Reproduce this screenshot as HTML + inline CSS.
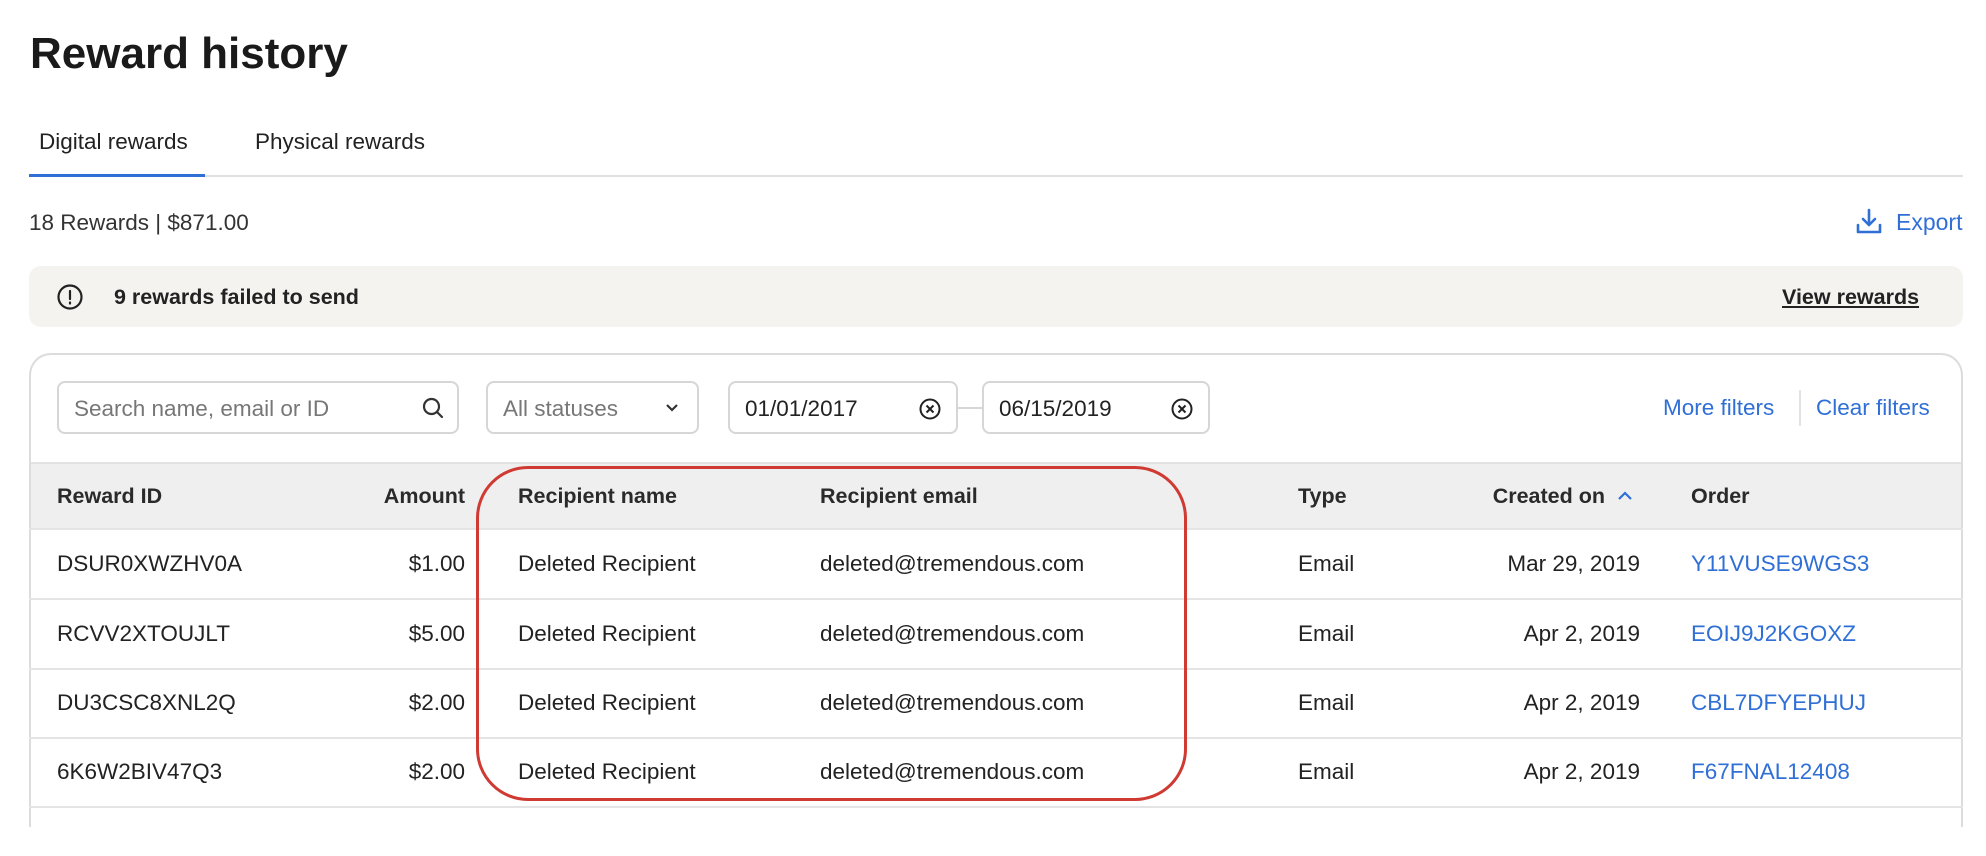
<!DOCTYPE html>
<html><head><meta charset="utf-8"><style>
*{margin:0;padding:0;box-sizing:border-box}
body{width:1986px;height:856px;overflow:hidden;background:#fff;font-family:"Liberation Sans",sans-serif;color:#222;position:relative}
.a{position:absolute;white-space:nowrap}
.t{font-size:22.5px;line-height:1}
.blue{color:#2f6fd6}
.box{position:absolute;top:381px;height:53px;border:2px solid #d6d6d6;border-radius:8px;background:#fff}
.box span{position:absolute;top:15px;font-size:22.5px;line-height:1}
.th{font-weight:700;color:#2a2a2a;font-size:21.5px}
.row{position:absolute;left:29px;width:1934px;border-top:2px solid #e4e4e4}
</style></head><body>
<div class="a" style="left:30px;top:29px;font-size:44px;font-weight:700;color:#1a1a1a">Reward history</div>
<div class="a t" style="left:39px;top:131px;color:#222">Digital rewards</div>
<div class="a t" style="left:255px;top:131px;color:#222">Physical rewards</div>
<div class="a" style="left:29px;top:175px;width:1934px;height:2px;background:#e0e0e0"></div>
<div class="a" style="left:29px;top:174px;width:176px;height:3px;background:#2f6fd6"></div>
<div class="a t" style="left:29px;top:212px;color:#333">18 Rewards | $871.00</div>
<svg class="a" style="left:1854px;top:207px" width="30" height="30" viewBox="0 0 30 30" fill="none" stroke="#2f6fd6" stroke-width="2.6" stroke-linecap="round" stroke-linejoin="round"><path d="M15 3v15M9 12l6 6 6-6M4 18v7h22v-7"/></svg>
<div class="a t blue" style="left:1896px;top:211px;font-size:23px">Export</div>
<div class="a" style="left:29px;top:266px;width:1934px;height:61px;background:#f5f3ef;border-radius:12px"></div>
<svg class="a" style="left:56px;top:283px" width="28" height="28" viewBox="0 0 28 28" fill="none" stroke="#222" stroke-width="2.2"><circle cx="14" cy="14" r="11.5"/><path d="M14 8v8M14 19.5v1" stroke-linecap="round"/></svg>
<div class="a t" style="left:114px;top:287px;font-weight:700;color:#222;font-size:21.5px">9 rewards failed to send</div>
<div class="a t" style="left:1782px;top:287px;font-weight:700;text-decoration:underline;color:#222;font-size:21.5px">View rewards</div>
<div class="a" style="left:29px;top:353px;width:1934px;height:474px;border:2px solid #dcdcdc;border-bottom:none;border-radius:22px 22px 0 0"></div>
<div class="box" style="left:57px;width:402px"><span style="left:15px;color:#777">Search name, email or ID</span>
<svg style="position:absolute;right:12px;top:13px" width="24" height="24" viewBox="0 0 24 24" fill="none" stroke="#333" stroke-width="2.2"><circle cx="10.5" cy="10.5" r="7.5"/><path d="M16 16l5 5" stroke-linecap="round"/></svg></div>
<div class="box" style="left:486px;width:213px"><span style="left:15px;color:#777">All statuses</span>
<svg style="position:absolute;right:18px;top:20px" width="14" height="10" viewBox="0 0 14 10" fill="none" stroke="#333" stroke-width="2.2"><path d="M2 2l5 5 5-5"/></svg></div>
<div class="box" style="left:728px;width:230px"><span style="left:15px;color:#222">01/01/2017</span>
<svg style="position:absolute;right:14px;top:14px" width="24" height="24" viewBox="0 0 24 24" fill="none" stroke="#222" stroke-width="2"><circle cx="12" cy="12" r="9.5"/><path d="M8.5 8.5l7 7M15.5 8.5l-7 7"/></svg></div>
<div class="a" style="left:958px;top:407px;width:24px;height:2px;background:#d6d6d6"></div>
<div class="box" style="left:982px;width:228px"><span style="left:15px;color:#222">06/15/2019</span>
<svg style="position:absolute;right:14px;top:14px" width="24" height="24" viewBox="0 0 24 24" fill="none" stroke="#222" stroke-width="2"><circle cx="12" cy="12" r="9.5"/><path d="M8.5 8.5l7 7M15.5 8.5l-7 7"/></svg></div>
<div class="a t blue" style="left:1663px;top:397px">More filters</div>
<div class="a" style="left:1799px;top:390px;width:2px;height:36px;background:#e2e2e2"></div>
<div class="a t blue" style="left:1816px;top:397px">Clear filters</div>
<div class="a" style="left:31px;top:462px;width:1930px;height:67px;background:#efefef;border-top:2px solid #e2e2e2"></div>
<div class="a t th" style="left:57px;top:486px">Reward ID</div>
<div class="a t th" style="left:345px;top:486px;width:120px;text-align:right">Amount</div>
<div class="a t th" style="left:518px;top:486px">Recipient name</div>
<div class="a t th" style="left:820px;top:486px">Recipient email</div>
<div class="a t th" style="left:1298px;top:486px">Type</div>
<div class="a t th" style="left:1400px;top:486px;width:205px;text-align:right">Created on</div>
<svg class="a" style="left:1617px;top:490px" width="16" height="12" viewBox="0 0 16 12" fill="none" stroke="#2f6fd6" stroke-width="2.2"><path d="M2 9l6-6 6 6"/></svg>
<div class="a t th" style="left:1691px;top:486px">Order</div>
<div class="row" style="top:528px"></div><div class="row" style="top:598px"></div><div class="row" style="top:668px"></div><div class="row" style="top:737px"></div><div class="row" style="top:806px"></div>
<div class="a t" style="left:57px;top:553px">DSUR0XWZHV0A</div><div class="a t" style="left:345px;top:553px;width:120px;text-align:right">$1.00</div><div class="a t" style="left:518px;top:553px">Deleted Recipient</div><div class="a t" style="left:820px;top:553px">deleted@tremendous.com</div><div class="a t" style="left:1298px;top:553px">Email</div><div class="a t" style="left:1400px;top:553px;width:240px;text-align:right">Mar 29, 2019</div><div class="a t blue" style="left:1691px;top:553px">Y11VUSE9WGS3</div>
<div class="a t" style="left:57px;top:623px">RCVV2XTOUJLT</div><div class="a t" style="left:345px;top:623px;width:120px;text-align:right">$5.00</div><div class="a t" style="left:518px;top:623px">Deleted Recipient</div><div class="a t" style="left:820px;top:623px">deleted@tremendous.com</div><div class="a t" style="left:1298px;top:623px">Email</div><div class="a t" style="left:1400px;top:623px;width:240px;text-align:right">Apr 2, 2019</div><div class="a t blue" style="left:1691px;top:623px">EOIJ9J2KGOXZ</div>
<div class="a t" style="left:57px;top:692px">DU3CSC8XNL2Q</div><div class="a t" style="left:345px;top:692px;width:120px;text-align:right">$2.00</div><div class="a t" style="left:518px;top:692px">Deleted Recipient</div><div class="a t" style="left:820px;top:692px">deleted@tremendous.com</div><div class="a t" style="left:1298px;top:692px">Email</div><div class="a t" style="left:1400px;top:692px;width:240px;text-align:right">Apr 2, 2019</div><div class="a t blue" style="left:1691px;top:692px">CBL7DFYEPHUJ</div>
<div class="a t" style="left:57px;top:761px">6K6W2BIV47Q3</div><div class="a t" style="left:345px;top:761px;width:120px;text-align:right">$2.00</div><div class="a t" style="left:518px;top:761px">Deleted Recipient</div><div class="a t" style="left:820px;top:761px">deleted@tremendous.com</div><div class="a t" style="left:1298px;top:761px">Email</div><div class="a t" style="left:1400px;top:761px;width:240px;text-align:right">Apr 2, 2019</div><div class="a t blue" style="left:1691px;top:761px">F67FNAL12408</div>
<div class="a" style="left:476px;top:466px;width:711px;height:335px;border:3px solid #cf3a33;border-radius:52px"></div>
</body></html>
